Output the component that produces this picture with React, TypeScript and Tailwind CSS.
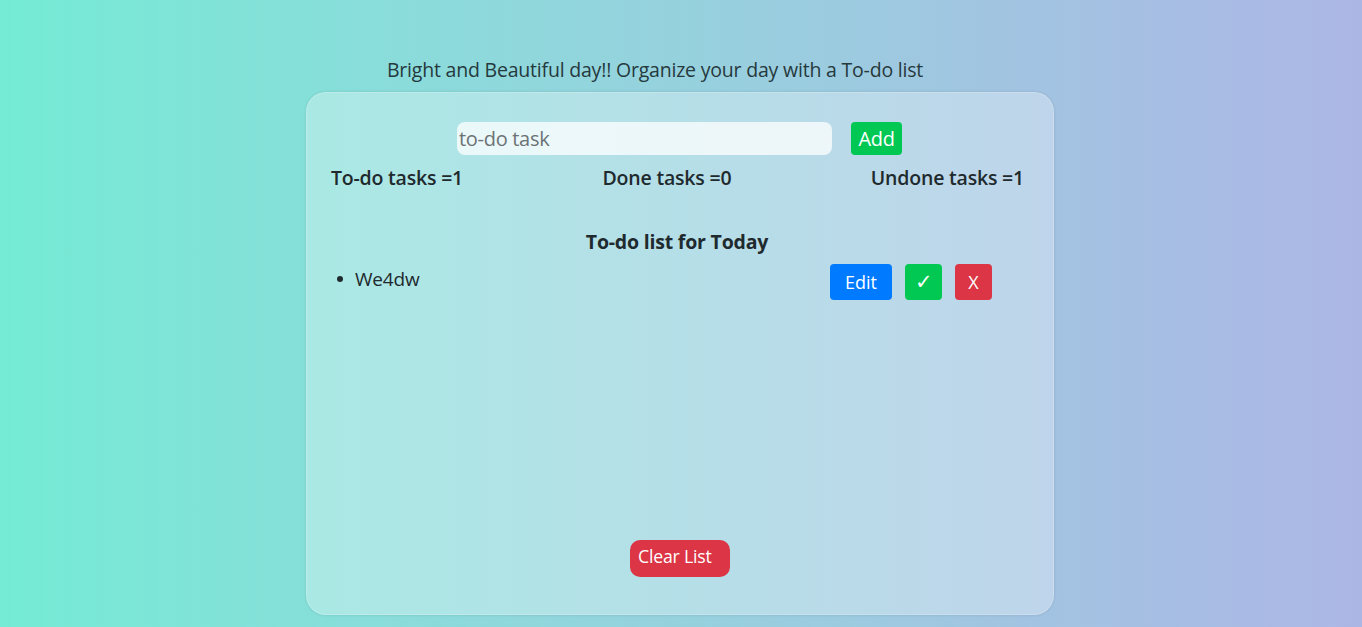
import React, { useState } from 'react';

interface Task {
  text: string;
  done: boolean;
}

export default function App() {
  const [tasks] = useState<Task[]>([{ text: 'We4dw', done: false }]);
  const done = tasks.filter((t) => t.done).length;

  return (
    <div
      className="w-full h-[627px] overflow-hidden bg-gradient-to-r from-[#74ebd5] to-[#acb6e5] text-[#1f2a2e]"
      style={{ fontFamily: '"Open Sans", "Noto Sans", sans-serif' }}
    >
      <div className="flex flex-col items-center pt-[57px]">
        <p className="text-[19.5px] leading-[26px] text-[#26393d] ml-[-52px] tracking-[-0.2px]">
          Bright and Beautiful day!! Organize your day with a To-do list
        </p>

        <div className="w-[748px] h-[523px] mt-[9px] ml-[-2px] rounded-[20px] bg-white/30 border border-white/20 shadow-[0_0_3px_rgba(0,0,0,0.12)] flex flex-col">
          {/* input row */}
          <div className="flex items-center mt-[29px] ml-[150px]">
            <input
              type="text"
              placeholder="to-do task"
              className="w-[375px] h-[33px] rounded-[8px] bg-white/75 px-[2px] text-[20px] text-gray-800 placeholder:text-[#6b7275] outline-none tracking-[-0.3px]"
            />
            <button className="ml-[19px] h-[33px] w-[51px] rounded-[4px] bg-[#00c853] text-white text-[20px] tracking-[-0.3px]">
              Add
            </button>
          </div>

          {/* counters */}
          <div className="flex justify-between pl-[24px] pr-[29px] mt-[10px] text-[19.5px] font-semibold leading-[26px] tracking-[-0.2px]">
            <span>To-do tasks ={tasks.length}</span>
            <span>Done tasks ={done}</span>
            <span>Undone tasks ={tasks.length - done}</span>
          </div>

          <h2 className="mt-[38px] pr-[6px] text-center text-[19.5px] font-bold leading-[26px] tracking-[-0.2px]">
            To-do list for Today
          </h2>

          <ul className="mt-[8px] pl-[49px] pr-[61px]">
            {tasks.map((t) => (
              <li key={t.text} className="flex items-start justify-between">
                <span className="flex items-center text-[19px] leading-[26px] mt-[3px] ml-[-19px] tracking-[-0.2px]">
                  <span className="w-[6px] h-[6px] rounded-full bg-[#1f2a2e] mr-[12px]"></span>
                  {t.text}
                </span>
                <div className="flex gap-[13px] mt-[1px]">
                  <button className="h-[36px] w-[62px] rounded-[4px] bg-[#007bff] text-white text-[18px]">Edit</button>
                  <button className="h-[36px] w-[37px] rounded-[4px] bg-[#00c853] text-white text-[21px]">✓</button>
                  <button className="h-[36px] w-[37px] rounded-[4px] bg-[#dc3545] text-white text-[18px]">X</button>
                </div>
              </li>
            ))}
          </ul>

          <div className="mt-auto mb-[37px] flex justify-center">
            <button className="h-[37px] w-[100px] rounded-[10px] bg-[#dc3545] text-white text-[17.7px] text-left pl-[8px] pb-[4px] tracking-[-0.2px]">
              Clear List
            </button>
          </div>
        </div>
      </div>
    </div>
  );
}
